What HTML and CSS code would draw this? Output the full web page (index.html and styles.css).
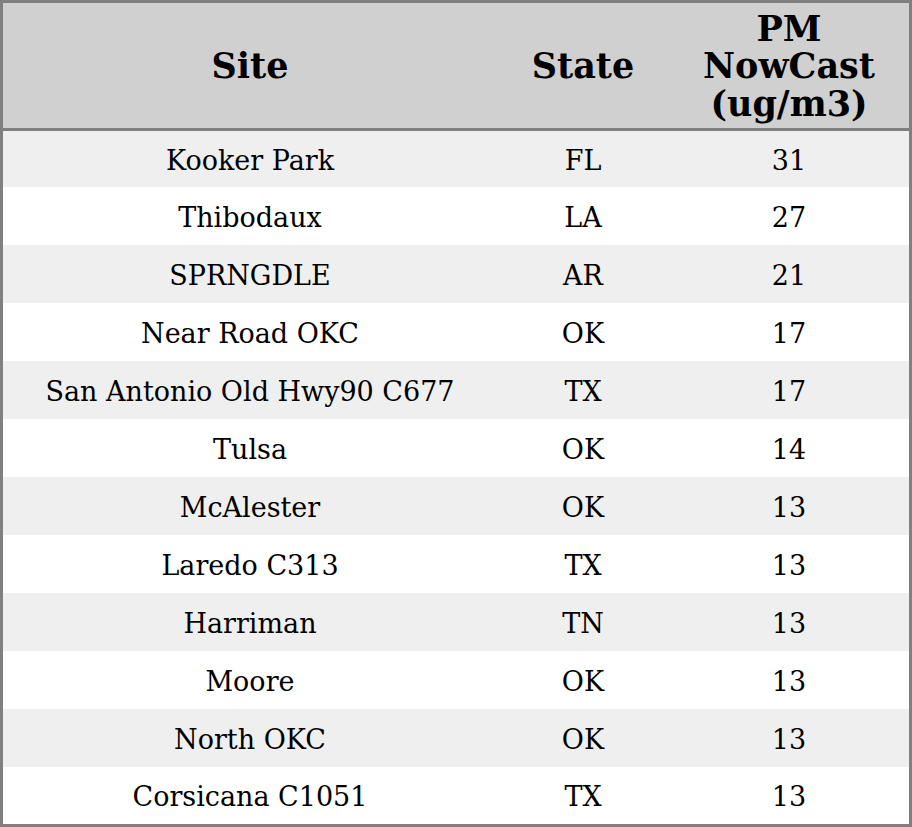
FILE: index.html
```html
<!DOCTYPE html>
<html>
<head>
<meta charset="utf-8">
<link rel="stylesheet" href="styles.css">
</head>
<body>
<table class="aq">
  <colgroup>
    <col class="c-site">
    <col class="c-state">
    <col class="c-pm">
  </colgroup>
  <thead>
    <tr><th>Site</th><th>State</th><th>PM<br>NowCast<br>(ug/m3)</th></tr>
  </thead>
  <tbody>
    <tr class="first"><td>Kooker Park</td><td>FL</td><td>31</td></tr>
    <tr><td>Thibodaux</td><td>LA</td><td>27</td></tr>
    <tr><td>SPRNGDLE</td><td>AR</td><td>21</td></tr>
    <tr><td>Near Road OKC</td><td>OK</td><td>17</td></tr>
    <tr><td>San Antonio Old Hwy90 C677</td><td>TX</td><td>17</td></tr>
    <tr><td>Tulsa</td><td>OK</td><td>14</td></tr>
    <tr><td>McAlester</td><td>OK</td><td>13</td></tr>
    <tr><td>Laredo C313</td><td>TX</td><td>13</td></tr>
    <tr><td>Harriman</td><td>TN</td><td>13</td></tr>
    <tr><td>Moore</td><td>OK</td><td>13</td></tr>
    <tr><td>North OKC</td><td>OK</td><td>13</td></tr>
    <tr class="last"><td>Corsicana C1051</td><td>TX</td><td>13</td></tr>
  </tbody>
</table>
</body>
</html>
```
FILE: styles.css
```css
html, body {
  margin: 0;
  padding: 0;
  background: #ffffff;
}
.aq {
  width: 912px;
  border-collapse: separate;
  border-spacing: 0;
  border: 3px solid #808080;
  box-sizing: border-box;
  table-layout: fixed;
  font-family: "DejaVu Serif", serif;
  color: #000;
}
.c-site { width: 494px; }
.c-state { width: 172px; }
.c-pm { width: 240px; }
.aq th {
  background: #d0d0d0;
  font-weight: bold;
  font-size: 35px;
  line-height: 37.5px;
  height: 124px;
  padding: 1px 0 0;
  text-align: center;
  vertical-align: middle;
  border-bottom: 3px solid #808080;
}
.aq td {
  font-size: 27px;
  height: 56px;
  padding: 2px 0 0;
  text-align: center;
  vertical-align: middle;
}
.aq tbody tr.first td { height: 54px; }
.aq tbody tr.last td { height: 55px; }
.aq tbody tr:nth-child(odd) td { background: #efefef; }
```
